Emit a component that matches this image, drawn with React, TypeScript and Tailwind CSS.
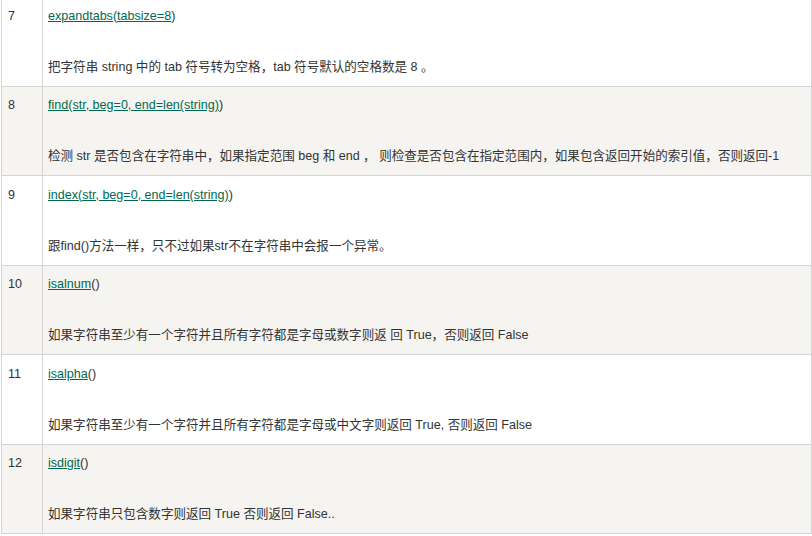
import React from "react";

type Row = {
  n: number;
  link: React.ReactNode;
  tail: string;
  desc: React.ReactNode;
};

const rows: Row[] = [
  { n: 7, link: "expandtabs(tabsize=8", tail: ")", desc: "把字符串 string 中的 tab 符号转为空格，tab 符号默认的空格数是 8 。" },
  { n: 8, link: "find(str, beg=0, end=len(string)", tail: ")", desc: "检测 str 是否包含在字符串中，如果指定范围 beg 和 end ， 则检查是否包含在指定范围内，如果包含返回开始的索引值，否则返回-1" },
  { n: 9, link: "index(str, beg=0, end=len(string)", tail: ")", desc: "跟find()方法一样，只不过如果str不在字符串中会报一个异常。" },
  { n: 10, link: "isalnum", tail: "()", desc: "如果字符串至少有一个字符并且所有字符都是字母或数字则返 回 True，否则返回 False" },
  { n: 11, link: "isalpha", tail: "()", desc: "如果字符串至少有一个字符并且所有字符都是字母或中文字则返回 True, 否则返回 False" },
  { n: 12, link: "isdigit", tail: "()", desc: "如果字符串只包含数字则返回 True 否则返回 False.." },
];

export default function App() {
  return (
    <div
      className="w-[812px] h-[536px] overflow-hidden bg-white text-[#333] text-[12.55px]"
      style={{ fontFamily: '"Liberation Sans", Arial, "Noto Sans CJK SC", sans-serif' }}
    >
      <div className="mt-[-4px] ml-px w-[811px] border-l border-r border-[#d4d4d4]">
        {rows.map((r, i) => (
          <div
            key={r.n}
            className={`flex border-b border-[#d4d4d4] ${i === 0 ? "border-t" : ""} ${
              i % 2 === 1 ? "bg-[#f6f4f0]" : "bg-white"
            }`}
          >
            <div className="w-[41px] shrink-0 border-r border-[#d4d4d4] px-[6px] pt-[6.5px] pb-[5.5px] leading-[25.5px]">
              {r.n}
            </div>
            <div className="flex-1 px-[5px] pt-[6.5px] pb-[5.5px] leading-[25.5px]">
              <div>
                <a href="#" className="text-[#006a50] underline">
                  {r.link}
                </a>
                {r.tail}
              </div>
              <div>&nbsp;</div>
              <div>{r.desc}</div>
            </div>
          </div>
        ))}
      </div>
    </div>
  );
}
